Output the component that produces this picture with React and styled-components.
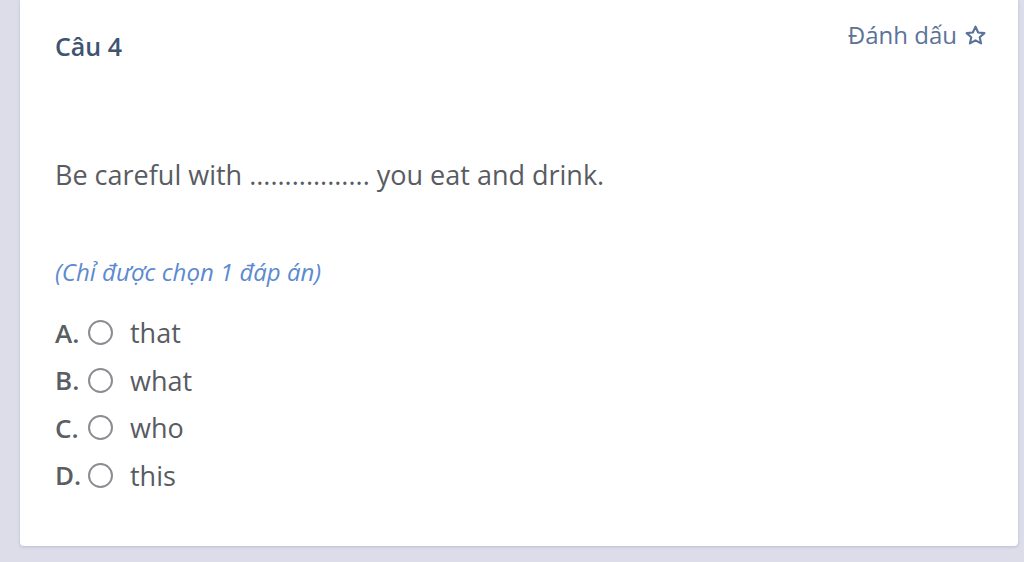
import React from 'react'
import styled, { createGlobalStyle } from 'styled-components'

const GlobalStyle = createGlobalStyle`
  html, body {
    margin: 0;
    padding: 0;
    background: #dcdde9;
  }
  body {
    font-family: "Open Sans", "Noto Sans", sans-serif;
  }
`

const options = [
  { key: 'A', text: 'that' },
  { key: 'B', text: 'what' },
  { key: 'C', text: 'who' },
  { key: 'D', text: 'this' },
]

export default function App() {
  return (
    <>
      <GlobalStyle />
      <Page>
        <Card>
          <Header>
            <Title>Câu 4</Title>
            <Mark>
              Đánh dấu
              <svg width="23" height="23" viewBox="0 0 24 24" fill="none" stroke="currentColor" strokeWidth="2.2" strokeLinejoin="round">
                <path d="M12 2.8l2.8 6 6.5.7-4.9 4.4 1.4 6.4L12 17l-5.8 3.3 1.4-6.4-4.9-4.4 6.5-.7z" />
              </svg>
            </Mark>
          </Header>
          <Question>Be careful with ................. you eat and drink.</Question>
          <Hint>(Chỉ được chọn 1 đáp án)</Hint>
          <Options>
            {options.map(o => (
              <Option key={o.key}>
                <Letter>{o.key}.</Letter>
                <Radio />
                <OptionText>{o.text}</OptionText>
              </Option>
            ))}
          </Options>
        </Card>
      </Page>
    </>
  )
}

const Page = styled.div`
  padding: 0 6px 16px 20px;
`

const Card = styled.div`
  height: 546px;
  box-sizing: border-box;
  background: #fff;
  border-radius: 0 0 4px 4px;
  box-shadow: 0 1px 3px rgba(120, 125, 160, 0.35);
  padding: 0 31px 0 35px;
`

const Header = styled.div`
  display: flex;
  justify-content: space-between;
  align-items: flex-start;
  padding-top: 20px;
`

const Title = styled.div`
  margin-top: 12px;
  font-size: 25px;
  line-height: 29px;
  font-weight: 600;
  color: #3e5470;
`

const Mark = styled.div`
  display: flex;
  align-items: center;
  gap: 7px;
  font-size: 24px;
  line-height: 30px;
  color: #5b7397;
`

const Question = styled.div`
  margin-top: 96px;
  font-size: 27px;
  line-height: 36px;
  color: #585c62;
`

const Hint = styled.div`
  margin-top: 64px;
  font-size: 24px;
  line-height: 30px;
  font-style: italic;
  color: #5b8ad0;
`

const Options = styled.div`
  margin-top: 22px;
  display: flex;
  flex-direction: column;
`

const Option = styled.div`
  display: flex;
  align-items: center;
  height: 47.5px;
`

const Letter = styled.span`
  font-size: 26px;
  font-weight: 600;
  color: #5a5e63;
  width: 32px;
`

const Radio = styled.span`
  width: 25px;
  height: 25px;
  box-sizing: border-box;
  border: 2px solid #8a8d91;
  border-radius: 50%;
  margin-left: 1px;
`

const OptionText = styled.span`
  margin-left: 17px;
  font-size: 27px;
  color: #585c62;
`
